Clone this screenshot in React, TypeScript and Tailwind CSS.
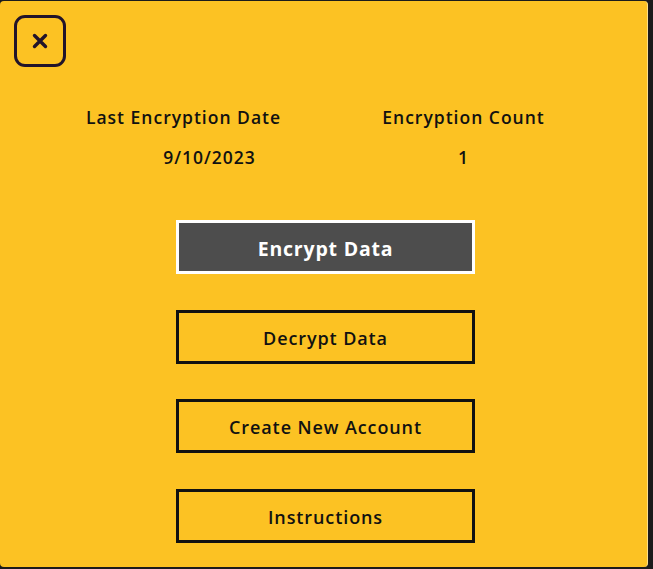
import React from 'react';

const stats = [
  { label: 'Last Encryption Date', value: '9/10/2023', shift: 'pl-[52px]' },
  { label: 'Encryption Count', value: '1', shift: '' },
];

const actions = ['Decrypt Data', 'Create New Account', 'Instructions'];

const App: React.FC = () => {
  return (
    <div className="w-[653px] h-[569px] bg-[#1b1b1b] pt-px" style={{ fontFamily: '"Open Sans", "Noto Sans", sans-serif' }}>
      <div className="w-[648px] h-[566px] bg-[#fcc223] rounded-[4px] border-r border-[#fde08a] flex flex-col">
        <div className="pl-[14px] pt-[14px]">
          <button className="w-[52px] h-[52px] rounded-[11px] border-[3px] border-[#22142a] flex items-center justify-center">
            <svg width="20" height="20" viewBox="0 0 20 20" fill="none" stroke="#22142a" strokeWidth="3.4" strokeLinecap="round">
              <path d="M4.5 4.5 L15.5 15.5 M15.5 4.5 L4.5 15.5" />
            </svg>
          </button>
        </div>

        <div className="grid grid-cols-[280px_280px] justify-center mt-[38px] text-[#111] font-semibold tracking-[1px]">
          {stats.map(s => (
            <div key={s.label} className="flex flex-col">
              <span className="text-center text-[17.5px] leading-[24px]">{s.label}</span>
              <span className={`text-center text-[17.5px] leading-[24px] mt-[16px] ${s.shift}`}>{s.value}</span>
            </div>
          ))}
        </div>

        <div className="flex flex-col items-center pl-[4px] mt-[51px] gap-[35.5px]">
          <button className="w-[299px] h-[54px] pt-[3px] bg-[#4d4d4d] border-[3px] border-white text-white text-[19.5px] font-bold tracking-[0.8px]">
            Encrypt Data
          </button>
          {actions.map(a => (
            <button key={a} className="w-[299px] h-[54px] pt-[3px] border-[3px] border-[#111] text-[#111] text-[18px] font-semibold tracking-[0.9px]">
              {a}
            </button>
          ))}
        </div>
      </div>
    </div>
  );
};

export default App;
